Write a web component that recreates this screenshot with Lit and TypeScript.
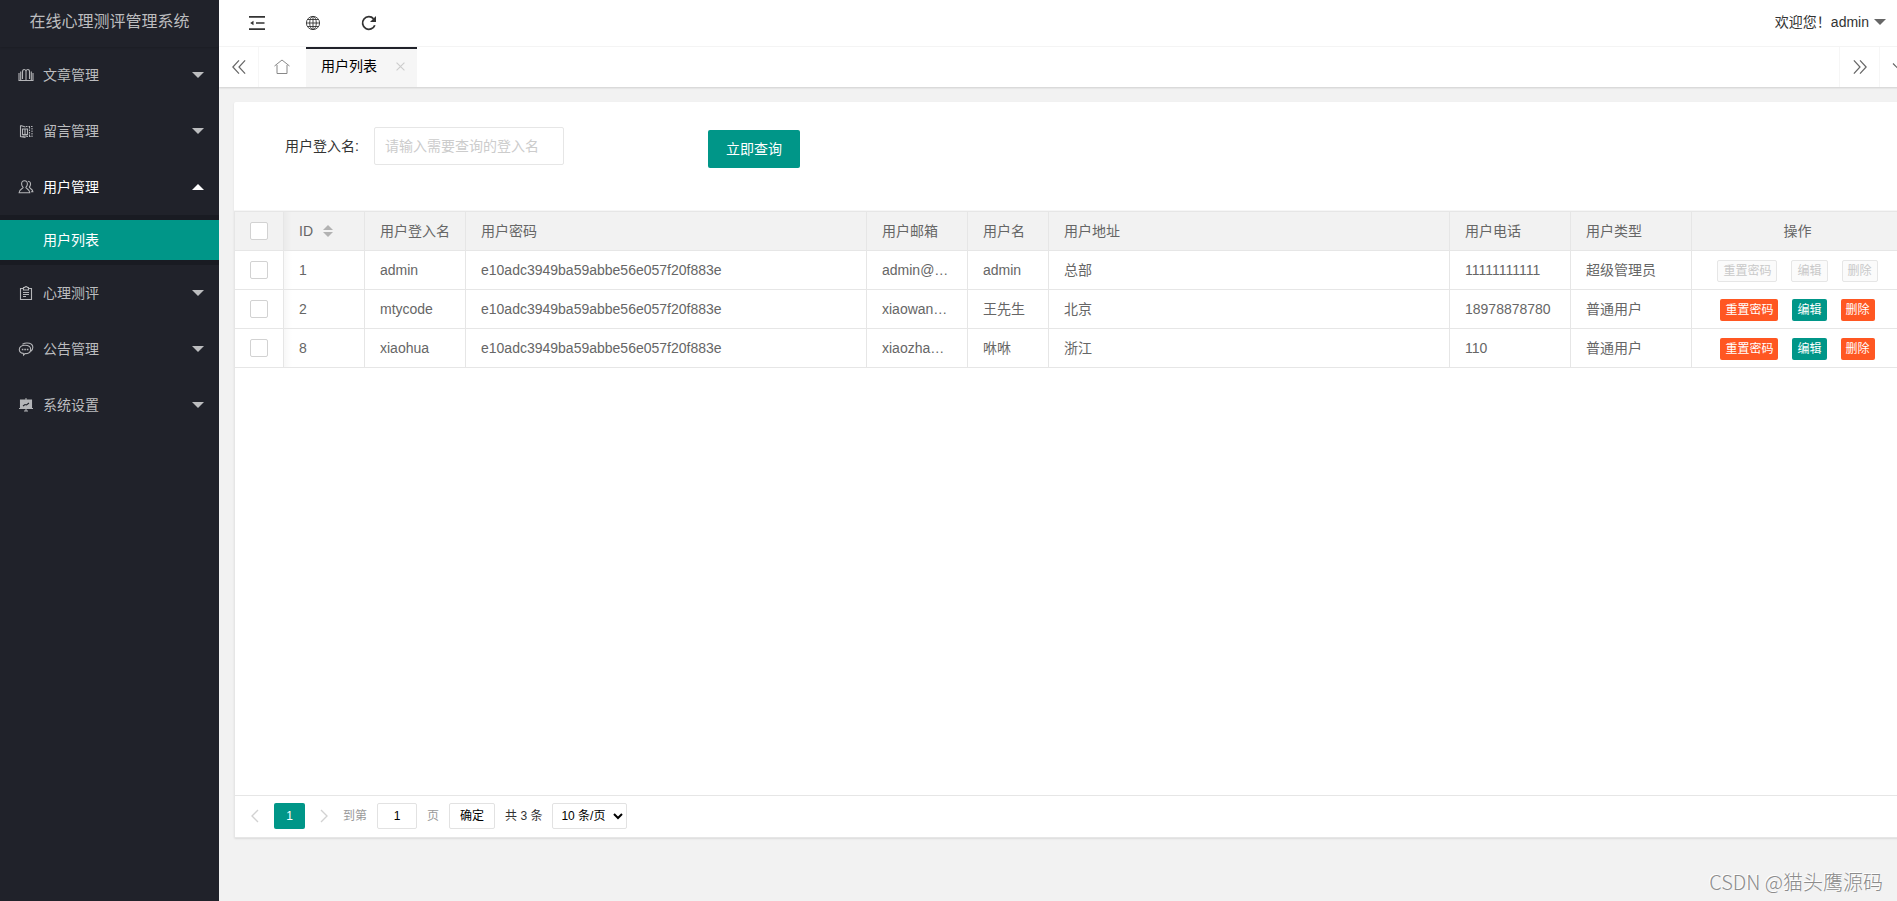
import { LitElement, html, css, svg, nothing } from "lit";
import { customElement, state } from "lit/decorators.js";

const icon = (name: string, body: unknown) =>
  html`<svg class="icon ${name}" viewBox="0 0 16 16" aria-hidden="true">${body}</svg>`;

const icons = {
  book: icon("nav-icon", svg`<path d="M1 6v7.500h14V6M2.700 4.500v9M13.300 4.500v9M4.500 12V5Q4.500 2.500 6.200 2.500T8 4.500V14M8 4.500Q8 2.500 9.800 2.500T11.500 5V12"/>`),
  note: icon("nav-icon", svg`<path d="M2.500 2.500v11l5 1M2.500 2.500l5 1.500M4.500 6h5v5.500h-5zM7 6v5.500M4.500 13h5"/><path stroke-dasharray="1.500 1" d="M8 3.500h6v10H8M11.500 4v9"/>`),
  user: icon("nav-icon", svg`<path d="M6.500 1.800C4.300 1.800 3.500 3.200 3.600 5c.1 1.700.8 2.700 1.500 3.400 0 1.400-4 1.600-4 5.300h10.700c0-3.700-3.900-3.900-3.900-5.300.7-.7 1.500-1.700 1.500-3.400 0-1.800-.7-3.200-2.900-3.200z"/><path d="M10 2.200c2 .2 2.700 1.600 2.500 3.300-.1 1.300-.7 2-1.200 2.600 0 1.300 3.500 1.800 3.600 4.700h-2"/>`),
  clipboard: icon("nav-icon", svg`<path d="M5.500 3.500h-3v11h11v-11h-3M5.500 5V2.500h1.300a1.300 1.300 0 0 1 2.500 0h1.200V5zM5 7.500h6M5 9.500h6M5 11.500h3"/>`),
  chat: icon("nav-icon", svg`<path d="M7 4.200c3.300 0 5.700 1.700 5.700 4.200s-2.400 4.200-5.700 4.200L5.600 14l-.3-1.600C2.800 12 1.300 10.500 1.300 8.400 1.300 5.900 3.700 4.200 7 4.200z"/><path d="M4.500 3.300C9 .5 15 2.500 14.800 6.500c0 1.900-1 3-2 3.700"/><path stroke-width="1.600" stroke-dasharray="1.600 .9" d="M3.800 8.500h6.600"/>`),
  board: icon("nav-icon", svg`<path fill="currentColor" d="M2.500 3h11v8h-11z"/><path d="M1 11.500h14M8 11v3M6 14h4M7 2h2"/><path class="cut" d="M5 9l2-1.500 1.500.5L11 6"/>`),
  shrink: icon("tool-icon", svg`<path d="M0 1.900h16M0 14.100h16M7 8h8.500" stroke-width="1.600"/><path fill="currentColor" stroke="none" d="M4.500 5.800v4.400L1.200 8z"/>`),
  globe: icon("tool-icon thin", svg`<circle cx="8" cy="8" r="6.600"/><ellipse cx="8" cy="8" rx="3.300" ry="6.600"/><path d="M1.400 8h13.200M8 1.400v13.200M2.500 4.500h11M2.500 11.500h11"/>`),
  refresh: icon("tool-icon", svg`<path stroke-width="1.800" d="M13.800 10.200A6.300 6.300 0 1 1 12.600 3.800"/><path fill="currentColor" stroke="none" d="M15 1v6H9z"/>`),
  left: icon("tab-icon", svg`<path d="M8 .5L1 8l7 7.500M15 .5L8 8l7 7.500"/>`),
  right: icon("tab-icon", svg`<path d="M1 .5L8 8l-7 7.500M8 .5L15 8l-7 7.500"/>`),
  down: icon("tab-icon", svg`<path d="M0 4l8 8 8-8"/>`),
  home: icon("home-icon", svg`<path d="M.5 7L8 1l7.500 6M3 6v8.500h10V6"/>`),
  close: icon("close-icon", svg`<path d="M1 1l14 14M15 1L1 15"/>`),
  prev: icon("page-icon", svg`<path d="M12 0L4 8l8 8"/>`),
  next: icon("page-icon", svg`<path d="M4 0l8 8-8 8"/>`),
};

const menu = [
  { label: "文章管理", glyph: icons.book },
  { label: "留言管理", glyph: icons.note },
  { label: "用户管理", glyph: icons.user, children: ["用户列表"] },
  { label: "心理测评", glyph: icons.clipboard },
  { label: "公告管理", glyph: icons.chat },
  { label: "系统设置", glyph: icons.board },
];

interface User {
  id: number;
  login: string;
  email: string;
  name: string;
  address: string;
  phone: string;
  type: string;
  locked?: boolean;
}

const hash = "e10adc3949ba59abbe56e057f20f883e";
const users: User[] = [
  { id: 1, login: "admin", email: "admin@…", name: "admin", address: "总部", phone: "11111111111", type: "超级管理员", locked: true },
  { id: 2, login: "mtycode", email: "xiaowan…", name: "王先生", address: "北京", phone: "18978878780", type: "普通用户" },
  { id: 8, login: "xiaohua", email: "xiaozha…", name: "咻咻", address: "浙江", phone: "110", type: "普通用户" },
];

@customElement("app-root")
class AppRoot extends LitElement {
  @state() private open = "用户管理";

  static styles = css`
    :host {
      display: block;
      height: 100vh;
      overflow: hidden;
      font: 14px/24px "Liberation Sans", "Noto Sans CJK SC", sans-serif;
      color: #333;
      background: #f2f2f2;
    }
    * { box-sizing: border-box; }
    button, input, select { font: inherit; margin: 0; }
    button { border: 0; background: none; padding: 0; color: inherit; cursor: pointer; }
    a { color: inherit; text-decoration: none; }
    .icon { display: block; fill: none; stroke: currentColor; overflow: visible; flex: none; }
    .layout { display: flex; height: 100%; }

    .side { width: 219px; flex: none; background: #20222a; color: #bcbdbf; }
    .brand {
      height: 47px; padding-bottom: 4px; display: flex; align-items: center; justify-content: center;
      font-size: 16px; box-shadow: 0 1px 2px rgba(0, 0, 0, .15);
    }
    .nav-item {
      width: 100%; height: 56px; display: flex; align-items: center; padding: 0 15px 0 18px;
      gap: 9px; text-align: left;
    }
    .nav-item.open { color: #fff; }
    .nav-icon { width: 16px; height: 16px; color: #b4b5b8; stroke-width: 1.1; }
    .cut { stroke: #20222a; }
    .nav-label { flex: 1; }
    .caret { border: 6px solid transparent; border-top-color: currentColor; border-bottom: 0; }
    .open .caret { border-bottom: 6px solid currentColor; border-top: 0; }
    .sub { background: #191b22; padding: 5px 0; }
    .sub-link { display: flex; align-items: center; height: 40px; padding-left: 43px; background: #009688; color: #fff; }

    .main { flex: 1; min-width: 0; margin-right: -23px; display: flex; flex-direction: column; }
    .top { height: 47px; flex: none; display: flex; align-items: center; background: #fff; border-bottom: 1px solid #f6f6f6; padding: 0 34px 0 30px; }
    .tools { display: flex; gap: 40px; flex: 1; }
    .tool-icon { width: 16px; height: 16px; stroke-width: 1.4; }
    .tool-icon.thin { stroke-width: .9; }
    .account { display: flex; align-items: center; gap: 5px; padding-bottom: 3px; }
    .account .caret { color: #666; }
    .tabs { height: 40px; flex: none; display: flex; background: #fff; box-shadow: 0 1px 2px rgba(0, 0, 0, .15); }
    .tab-tool { width: 40px; display: flex; align-items: center; justify-content: center; color: #666; border-right: 1px solid #f6f6f6; }
    .tab-tool.end { width: 41px; margin-left: -1px; border-right: 0; border-left: 1px solid #f6f6f6; }
    .tab-tool.home { width: 47px; border-right: 0; padding-right: 2px; color: #888; }
    .tab-icon { width: 14px; height: 14px; stroke-width: 1.4; }
    .home-icon { width: 16px; height: 16px; stroke-width: 1; }
    .tab { display: flex; align-items: center; gap: 16px; padding: 0 9px 4px 15px; background: #f6f6f6; border-top: 2px solid #20222a; color: #000; }
    .tab-close { padding: 3px; color: #ccc; }
    .close-icon { width: 9px; height: 9px; stroke-width: 2; }
    .tab-fill { flex: 1; }

    .card { flex: 1; margin: 15px 15px 63px; display: flex; flex-direction: column; background: #fff; box-shadow: 0 1px 2px rgba(0, 0, 0, .1); min-height: 0; border-radius: 2px; }
    .search { display: flex; align-items: flex-start; height: 109px; flex: none; padding: 25px 0 0 51px; border-bottom: 1px solid #f6f6f6; }
    .search label { line-height: 38px; width: 89px; }
    .query { width: 190px; height: 38px; border: 1px solid #e6e6e6; border-radius: 2px; padding: 0 10px; }
    .query::placeholder { color: #ccc; opacity: 1; }
    .submit { height: 38px; padding: 0 18px; margin: 3px 0 0 144px; background: #009688; color: #fff; border-radius: 2px; }

    .grid { flex: 1; display: flex; flex-direction: column; border: 1px solid #e6e6e6; min-height: 0; }
    .rows { flex: 1; }
    table { table-layout: fixed; width: 100%; border-collapse: separate; border-spacing: 0; color: #666; }
    th, td { height: 39px; padding: 0 15px; border: 0 solid #e6e6e6; border-width: 0 1px 1px 0; text-align: left; font-weight: 400; overflow: hidden; white-space: nowrap; text-overflow: ellipsis; }
    th { background: #f2f2f2; }
    tr > :last-child { text-align: center; }
    .c-pick { width: 49px; }
    .c-s { width: 81px; }
    .c-m { width: 101px; }
    .c-l { width: 121px; }
    .c-op { width: 212px; }
    .check { appearance: none; display: block; width: 18px; height: 18px; border: 1px solid #d2d2d2; border-radius: 2px; background: #fff; }
    .first { background: linear-gradient(to right, rgba(0, 0, 0, .03), transparent 8px); }
    th.first { background: linear-gradient(to right, rgba(0, 0, 0, .03), transparent 8px) #f2f2f2; }
    .sort { display: inline-flex; align-items: center; gap: 10px; }
    .arrows { display: grid; gap: 2px; color: #b2b2b2; }
    .up, .dn { border: 5px solid transparent; }
    .up { border-bottom-color: currentColor; border-top: 0; }
    .dn { border-top-color: currentColor; border-bottom: 0; }
    .ops { display: flex; justify-content: center; gap: 14px; padding-top: 2px; }
    .op { height: 22px; padding: 0 5px; font-size: 12px; line-height: 22px; border-radius: 2px; color: #fff; background: #ff5722; }
    .op.edit { background: #009688; }
    .op:disabled { border: 1px solid #e6e6e6; background: #fbfbfb; color: #c9c9c9; line-height: 20px; }

    .pager { height: 42px; display: flex; align-items: center; padding: 0 0 1px 14px; border-top: 1px solid #e6e6e6; font-size: 12px; color: #999; }
    .arrow { width: 12px; color: #d2d2d2; display: flex; justify-content: center; }
    .page-icon { width: 12px; height: 12px; stroke-width: 1.8; }
    .current { width: 31px; height: 26px; margin: 0 13px; background: #009688; color: #fff; border-radius: 2px; }
    .jump { display: flex; align-items: center; gap: 10px; margin-left: 13px; }
    .box { height: 26px; border: 1px solid #e2e2e2; border-radius: 2px; background: #fff; color: #000; }
    .page-no { width: 40px; text-align: center; padding: 0; }
    .go { padding: 0 10px; }
    .total { color: #333; }
    .size { width: 75px; padding: 0 0 0 4px; }

    .mark { position: absolute; right: 14px; bottom: 6px; font: 300 20px/26px "Noto Sans CJK SC", sans-serif; color: #8c8c8c; text-shadow: -1px -1px 0 #fff; }
  `;

  private renderOps(u: User) {
    return html`<div class="ops">
      <button class="op" ?disabled=${u.locked}>重置密码</button>
      <button class="op edit" ?disabled=${u.locked}>编辑</button>
      <button class="op" ?disabled=${u.locked}>删除</button>
    </div>`;
  }

  private renderNav() {
    return menu.map((m) => {
      const open = this.open === m.label;
      return html`
        <button class="nav-item ${open ? "open" : ""}" aria-expanded=${open} @click=${() => (this.open = open ? "" : m.label)}>
          ${m.glyph}<span class="nav-label">${m.label}</span><span class="caret"></span>
        </button>
        ${open && m.children
          ? html`<div class="sub">${m.children.map((c) => html`<a class="sub-link" href="#">${c}</a>`)}</div>`
          : nothing}`;
    });
  }

  render() {
    return html`
      <div class="layout">
        <nav class="side">
          <div class="brand">在线心理测评管理系统</div>
          ${this.renderNav()}
        </nav>
        <div class="main">
          <header class="top">
            <div class="tools">
              <button aria-label="侧边伸缩">${icons.shrink}</button>
              <button aria-label="前台">${icons.globe}</button>
              <button aria-label="刷新">${icons.refresh}</button>
            </div>
            <button class="account"><span>欢迎您！admin</span><span class="caret"></span></button>
          </header>
          <div class="tabs">
            <button class="tab-tool" aria-label="向左">${icons.left}</button>
            <button class="tab-tool home" aria-label="主页">${icons.home}</button>
            <div class="tab"><span>用户列表</span><button class="tab-close" aria-label="关闭">${icons.close}</button></div>
            <div class="tab-fill"></div>
            <button class="tab-tool end" aria-label="向右">${icons.right}</button>
            <button class="tab-tool end" aria-label="更多">${icons.down}</button>
          </div>
          <main class="card">
            <form class="search" @submit=${(e: Event) => e.preventDefault()}>
              <label for="login">用户登入名:</label>
              <input id="login" class="query" type="text" placeholder="请输入需要查询的登入名" />
              <button class="submit">立即查询</button>
            </form>
            <section class="grid">
              <div class="rows">
                <table>
                  <colgroup>
                    <col class="c-pick" /><col class="c-s" /><col class="c-m" /><col /><col class="c-m" />
                    <col class="c-s" /><col /><col class="c-l" /><col class="c-l" /><col class="c-op" />
                  </colgroup>
                  <thead>
                    <tr>
                      <th><input class="check" type="checkbox" aria-label="全选" /></th>
                      <th class="first"><span class="sort">ID<span class="arrows"><i class="up"></i><i class="dn"></i></span></span></th>
                      <th>用户登入名</th><th>用户密码</th><th>用户邮箱</th><th>用户名</th>
                      <th>用户地址</th><th>用户电话</th><th>用户类型</th><th>操作</th>
                    </tr>
                  </thead>
                  <tbody>
                    ${users.map((u) => html`
                      <tr>
                        <td><input class="check" type="checkbox" aria-label=${u.login} /></td>
                        <td class="first">${u.id}</td><td>${u.login}</td><td>${hash}</td><td>${u.email}</td>
                        <td>${u.name}</td><td>${u.address}</td><td>${u.phone}</td><td>${u.type}</td>
                        <td>${this.renderOps(u)}</td>
                      </tr>`)}
                  </tbody>
                </table>
              </div>
              <div class="pager">
                <button class="arrow" aria-label="上一页">${icons.prev}</button>
                <button class="current">1</button>
                <button class="arrow" aria-label="下一页">${icons.next}</button>
                <div class="jump">
                  <label for="page">到第</label>
                  <input id="page" class="box page-no" type="text" value="1" />
                  <span>页</span>
                  <button class="box go">确定</button>
                  <span class="total">共 3 条</span>
                  <select class="box size" aria-label="每页条数"><option>10 条/页</option></select>
                </div>
              </div>
            </section>
          </main>
        </div>
      </div>
      <div class="mark">CSDN @猫头鹰源码</div>
    `;
  }
}
